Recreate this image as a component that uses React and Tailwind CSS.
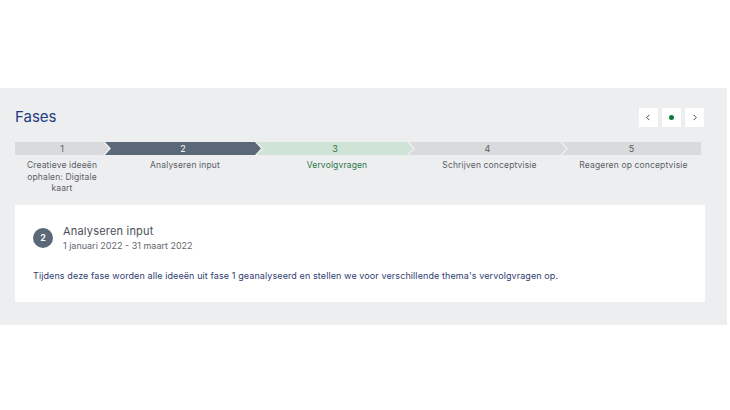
import React from "react";

const phases = [
  { nr: 1, label: "Creatieve ideeën ophalen: Digitale kaart", w: "w-[94px]" },
  { nr: 2, label: "Analyseren input", w: "w-[156px]" },
  { nr: 3, label: "Vervolgvragen", w: "w-[156px]" },
  { nr: 4, label: "Schrijven conceptvisie", w: "w-[157px]" },
  { nr: 5, label: "Reageren op conceptvisie", w: "w-[139px]" },
];

const clips = {
  first: "[clip-path:polygon(0_0,calc(100%-6px)_0,100%_50%,calc(100%-6px)_100%,0_100%)]",
  mid: "[clip-path:polygon(0_0,calc(100%-6px)_0,100%_50%,calc(100%-6px)_100%,0_100%,6px_50%)]",
  last: "[clip-path:polygon(0_0,100%_0,100%_100%,0_100%,6px_50%)]",
};

function Step({ phase, index }) {
  const active = phase.nr === 2;
  const next = phase.nr === 3;
  const clip = index === 0 ? clips.first : index === phases.length - 1 ? clips.last : clips.mid;
  const bar = active
    ? "bg-[#5b6877] text-white"
    : next
    ? "bg-[#cfe4d7] text-[#2b7548]"
    : "bg-[#d8dadd] text-[#555b63]";
  return (
    <div className={`${phase.w} ${index > 0 ? "-ml-[4px]" : ""} flex flex-col`}>
      <div className={`h-[13px] flex items-center justify-center text-[9px] ${bar} ${clip}`}>
        {phase.nr}
      </div>
      <p
        className={`mt-[5px] px-[6px] text-center text-[8.5px] leading-[11.5px] tracking-[0.15px] ${
          next ? "text-[#2b7548]" : "text-[#5a5f66]"
        } ${index === 0 ? "" : "pl-[10px]"}`}
      >
        {phase.label}
      </p>
    </div>
  );
}

export default function App() {
  return (
    <div className="min-h-screen bg-white font-['Inter',sans-serif]">
      <div className="h-[88px]"></div>
      <section className="w-[727px] bg-[#edeef0] pl-[15px] pr-[22px] pt-[19px] pb-[23px]">
        <div className="flex items-center justify-between">
          <h2 className="text-[15px] leading-[20px] text-[#233a7c]">Fases</h2>
          <div className="flex gap-[4px] mr-[1px]">
            <button className="w-[19px] h-[19px] bg-white flex items-center justify-center text-[#444]">
              <svg width="7" height="7" viewBox="0 0 8 8" fill="none" stroke="currentColor" strokeWidth="1.1">
                <path d="M5 1 L2 4 L5 7" />
              </svg>
            </button>
            <button className="w-[19px] h-[19px] bg-white flex items-center justify-center">
              <span className="w-[5px] h-[5px] rounded-full bg-[#0d7a3e]"></span>
            </button>
            <button className="w-[19px] h-[19px] bg-white flex items-center justify-center text-[#444]">
              <svg width="7" height="7" viewBox="0 0 8 8" fill="none" stroke="currentColor" strokeWidth="1.1">
                <path d="M3 1 L6 4 L3 7" />
              </svg>
            </button>
          </div>
        </div>

        <div className="mt-[15px] flex">
          {phases.map((p, i) => (
            <Step key={p.nr} phase={p} index={i} />
          ))}
        </div>

        <div className="mt-[10px] w-[690px] bg-white px-[18px] pt-[19px] pb-[20px]">
          <div className="flex items-center gap-[10px]">
            <div className="w-[20px] h-[20px] rounded-full bg-[#5b6877] text-white text-[9px] font-semibold flex items-center justify-center">
              2
            </div>
            <div>
              <div className="text-[11px] leading-[15px] tracking-[0.2px] text-[#4a4f57]">Analyseren input</div>
              <div className="text-[9px] leading-[13px] text-[#62676e]">1 januari 2022 - 31 maart 2022</div>
            </div>
          </div>
          <p className="mt-[17px] text-[9px] leading-[13px] tracking-[0.1px] text-[#2f3d70]">
            Tijdens deze fase worden alle ideeën uit fase 1 geanalyseerd en stellen we voor verschillende thema's vervolgvragen op.
          </p>
        </div>
      </section>
    </div>
  );
}
